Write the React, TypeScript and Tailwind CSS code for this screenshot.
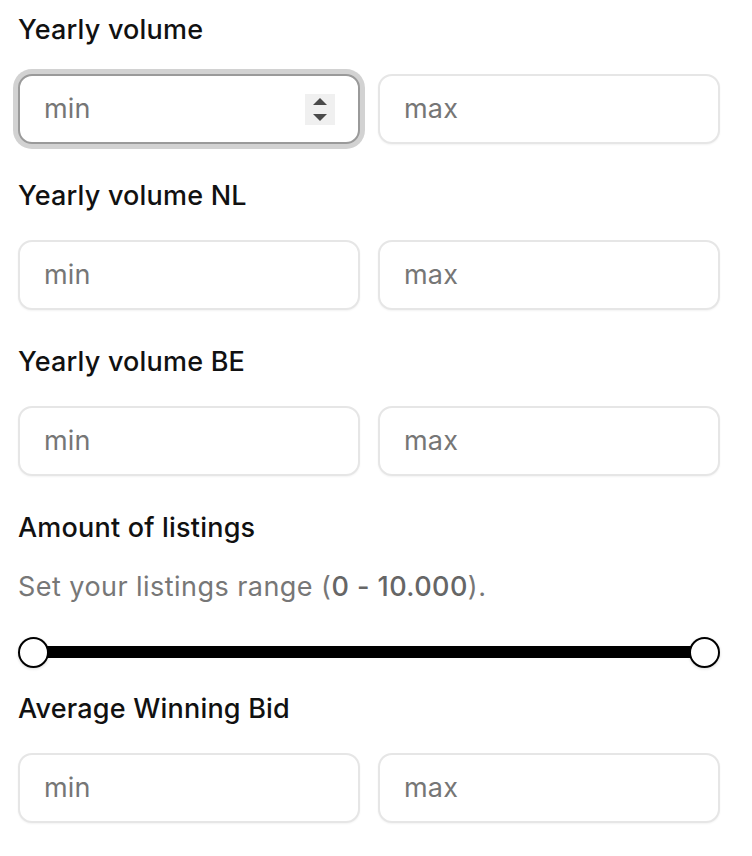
import React from "react";

const font = { fontFamily: "Inter, 'Noto Sans', sans-serif" };

function Label({ children, mb = "mb-[26px]" }: { children: React.ReactNode; mb?: string }) {
  return (
    <div className={`text-[27px] leading-[36px] font-[450] tracking-[0.2px] text-[#111111] ${mb}`}>{children}</div>
  );
}

function Field({ placeholder, focused = false }: { placeholder: string; focused?: boolean }) {
  return (
    <div
      className={
        "h-[70px] rounded-[14px] bg-white flex items-center pl-[24px] pr-[23px] " +
        (focused
          ? "border-2 border-[#9a9a9a] ring-[5px] ring-[#d2d2d2]"
          : "border-2 border-[#e6e6e6] shadow-[0_1px_2px_rgba(0,0,0,0.05)]")
      }
    >
      <span className="flex-1 text-[27px] leading-[36px] tracking-[0.2px] text-[#767676]">{placeholder}</span>
      {focused && (
        <div className="w-[30px] h-[31px] bg-[#f0f0f0] flex flex-col items-center justify-center gap-[9px]">
          <svg width="14" height="7" viewBox="0 0 14 7">
            <path d="M7 0 L14 7 L0 7 Z" fill="#4a4a4a" />
          </svg>
          <svg width="14" height="7" viewBox="0 0 14 7">
            <path d="M0 0 L14 0 L7 7 Z" fill="#4a4a4a" />
          </svg>
        </div>
      )}
    </div>
  );
}

function RangeRow({ focused = false }: { focused?: boolean }) {
  return (
    <div className="grid grid-cols-2 gap-[18px]">
      <Field placeholder="min" focused={focused} />
      <Field placeholder="max" />
    </div>
  );
}

export default function App() {
  return (
    <div className="bg-white min-h-[856px] pl-[18px] pr-[32px] pt-[12px]" style={font}>
      <Label>Yearly volume</Label>
      <RangeRow focused />
      <div className="h-[34px]" />
      <Label>Yearly volume NL</Label>
      <RangeRow />
      <div className="h-[34px]" />
      <Label>Yearly volume BE</Label>
      <RangeRow />
      <div className="h-[34px]" />
      <Label mb="mb-[23px]">Amount of listings</Label>
      <div className="text-[27px] leading-[36px] tracking-[0.45px] text-[#777777]">
        Set your listings range (<span className="font-[450] text-[#666666]">0 - 10.000</span>).
      </div>
      <div className="relative h-[32px] mt-[31px] flex items-center">
        <div className="absolute left-[15px] right-[15px] h-[12px] bg-black" />
        <div className="absolute left-0 w-[31px] h-[31px] rounded-full bg-white border-[2.5px] border-black shadow-[0_1px_3px_rgba(0,0,0,0.15)]" />
        <div className="absolute right-0 w-[31px] h-[31px] rounded-full bg-white border-[2.5px] border-black shadow-[0_1px_3px_rgba(0,0,0,0.15)]" />
      </div>
      <div className="h-[23px]" />
      <Label>Average Winning Bid</Label>
      <RangeRow />
    </div>
  );
}
